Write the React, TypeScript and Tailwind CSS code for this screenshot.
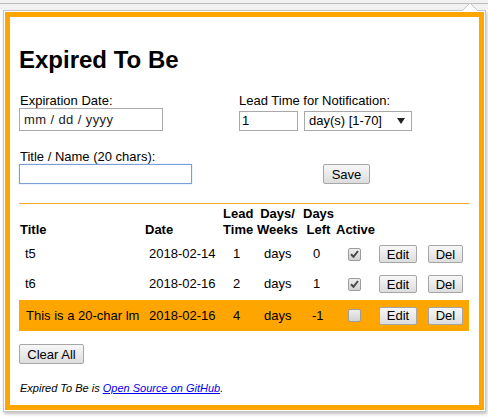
const body = "font-['Comic_Sans_MS','Liberation_Sans',sans-serif]";
const ui = "font-['Liberation_Sans',Arial,sans-serif]";

interface Item {
  title: string;
  date: string;
  lead: string;
  unit: string;
  left: string;
  active: boolean;
  expired?: boolean;
}

const items: Item[] = [
  { title: "t5", date: "2018-02-14", lead: "1", unit: "days", left: "0", active: true },
  { title: "t6", date: "2018-02-16", lead: "2", unit: "days", left: "1", active: true },
  {
    title: "This is a 20-char lm",
    date: "2018-02-16",
    lead: "4",
    unit: "days",
    left: "-1",
    active: false,
    expired: true,
  },
];

const Btn = ({ label, className }: { label: string; className: string }) => (
  <button
    className={`${ui} ${className} flex items-center justify-center text-[13px] leading-none text-black border border-[#a6a6a6] rounded-[2px] bg-gradient-to-b from-[#f7f7f7] to-[#dddddd]`}
  >
    {label}
  </button>
);

const Check = ({ on }: { on: boolean }) => (
  <div className="w-[13px] h-[13px] rounded-[2px] border border-[#9c9c9c] bg-gradient-to-b from-[#eeeeee] to-[#d2d2d2] flex items-center justify-center">
    {on && (
      <svg width="9" height="8" viewBox="0 0 9 8">
        <path d="M1 4.2 L3.5 6.8 L8 1" stroke="#4a4a4a" strokeWidth="2" fill="none" />
      </svg>
    )}
  </div>
);

const cols = "grid grid-cols-[126px_78px_34px_46px_33px_40px_49px_44px]";

export default function App() {
  return (
    <div className={`${body} w-[488px] h-[417px] bg-white relative overflow-hidden text-black`}>
      <div className="h-[3px] bg-[#f1f1f1]" />
      <div className="h-px bg-[#bcbcbc]" />
      <div className="h-[6px] bg-[#f1f1f1]" />

      {/* popup pointer */}
      <svg className="absolute left-[462px] top-[3px]" width="16" height="9" viewBox="0 0 16 9">
        <path d="M0 8 L8 0 L16 8" fill="#ffffff" stroke="#c6c6c6" strokeWidth="1" />
      </svg>

      <div className="ml-[3px] w-[483px] h-[402px] border border-[#c6c6c6] p-px bg-white shadow-[1px_2px_3px_rgba(0,0,0,0.25)]">
        <div className="h-full border-[5px] border-[#ffa500] px-[9px] pt-[29px]">
          <h1 className="text-[24px] leading-[28px] font-bold">Expired To Be</h1>

          <div className="mt-[19px] flex items-end">
            <div className="w-[220px] flex flex-col">
              <label className="text-[13px] leading-[15px] pl-px">Expiration Date:</label>
              <div className="w-[144px] h-[23px] border border-[#a9a9a9] flex items-center pl-[4px] text-[13px] text-[#222] tracking-[0.4px]">
                mm / dd / yyyy
              </div>
            </div>
            <div className="flex flex-col">
              <label className="text-[13px] leading-[15px]">Lead Time for Notification:</label>
              <div className="mt-[3px] flex gap-[6px]">
                <div className="w-[59px] h-[20px] border border-[#a9a9a9] flex items-center pl-[2px] text-[13px]">
                  1
                </div>
                <div className={`${ui} w-[108px] h-[20px] border border-[#a9a9a9] flex items-center pl-[4px] pr-[6px] text-[13px] justify-between`}>
                  <span>day(s) [1-70]</span>
                  <svg width="8" height="6" viewBox="0 0 8 6">
                    <path d="M0 0 L8 0 L4 6 Z" fill="#222" />
                  </svg>
                </div>
              </div>
            </div>
          </div>

          <div className="mt-[18px] flex items-end">
            <div className="w-[304px] flex flex-col">
              <label className="text-[13px] leading-[15px] pl-px">Title / Name (20 chars):</label>
              <div className="w-[173px] h-[20px] border border-[#7a9fd6] shadow-[0_0_1px_#9dbbe8]" />
            </div>
            <Btn label="Save" className="w-[47px] h-[20px]" />
          </div>

          <div className="mt-[19px] w-[450px] border-t border-[#f5a623]" />

          <div className="mt-[2px] w-[450px] text-[13px]">
            <div className={`${cols} h-[32px] items-end font-bold leading-[16px]`}>
              <div className="pl-px">Title</div>
              <div>Date</div>
              <div className="text-center w-fit">
                Lead
                <br />
                Time
              </div>
              <div className="text-center w-fit">
                Days/
                <br />
                Weeks
              </div>
              <div className="text-center w-fit">
                Days
                <br />
                Left
              </div>
              <div>Active</div>
              <div />
              <div />
            </div>

            {items.map((it, i) => (
              <div
                key={i}
                className={`${cols} mt-[2px] items-center ${it.expired ? "h-[31px] bg-[#ffa500]" : "h-[28px]"}`}
              >
                <div className={it.expired ? "pl-[7px]" : "pl-[6px]"}>{it.title}</div>
                <div className="pl-[4px]">{it.date}</div>
                <div className="pl-[10px]">{it.lead}</div>
                <div className="pl-[7px]">{it.unit}</div>
                <div className={it.left.startsWith("-") ? "pl-[9px]" : "pl-[10px]"}>{it.left}</div>
                <div className="pl-[12px]">
                  <Check on={it.active} />
                </div>
                <div className="pl-[3px]">
                  <Btn label="Edit" className="w-[38px] h-[18px]" />
                </div>
                <div className="pl-[3px]">
                  <Btn label="Del" className="w-[35px] h-[18px]" />
                </div>
              </div>
            ))}
          </div>

          <Btn label="Clear All" className="mt-[13px] w-[65px] h-[20px]" />

          <p className="mt-[18px] text-[11px] leading-[13px] italic pl-px">
            Expired To Be is{" "}
            <a className="text-[#0000ee] underline" href="#">
              Open Source on GitHub
            </a>
            .
          </p>
        </div>
      </div>
    </div>
  );
}
